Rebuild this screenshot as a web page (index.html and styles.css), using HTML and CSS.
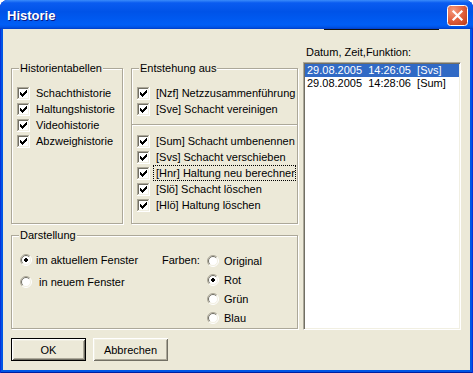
FILE: index.html
```html
<!DOCTYPE html>
<html lang="de">
<head>
    <meta charset="UTF-8">
    <title>Historie</title>
    <link rel="stylesheet" href="styles.css">
</head>
<body>
    <!-- kleine Symbole fuer Checkbox und Radio -->
    <svg class="defs" width="0" height="0">
        <symbol id="cb" viewBox="0 0 13 13">
            <rect width="13" height="13" fill="#fff"/>
            <path d="M0 0h12v1H1v11H0z" fill="#aca899"/>
            <path d="M1 1h10v1H2v9H1z" fill="#716f64"/>
            <path d="M12 0h1v13H0v-1h12z" fill="#fff"/>
            <path d="M11 1h1v11H1v-1h10z" fill="#f1efe2"/>
            <path d="M3 5h1v3H3zM4 6h1v3H4zM5 7h1v3H5zM6 6h1v3H6zM7 5h1v3H7zM8 4h1v3H8zM9 3h1v3H9z" fill="#000"/>
        </symbol>
        <symbol id="rb" viewBox="0 0 12 12">
            <circle cx="6" cy="6" r="5" fill="#fff"/>
            <path d="M9.9 2.1A5.5 5.5 0 0 0 2.1 9.9" fill="none" stroke="#aca899"/>
            <path d="M2.1 9.9A5.5 5.5 0 0 0 9.9 2.1" fill="none" stroke="#fff"/>
            <path d="M9.2 2.8A4.5 4.5 0 0 0 2.8 9.2" fill="none" stroke="#716f64"/>
            <path d="M2.8 9.2A4.5 4.5 0 0 0 9.2 2.8" fill="none" stroke="#f1efe2"/>
        </symbol>
        <symbol id="rbon" viewBox="0 0 12 12">
            <use href="#rb"/>
            <path d="M5 4h2v1h1v2H7v1H5V7H4V5h1z" fill="#000"/>
        </symbol>
    </svg>

    <div class="window">
        <div class="titlebar">
            <span class="title">Historie</span>
            <button class="close" aria-label="Schließen">
                <svg width="21" height="21" viewBox="0 0 21 21">
                    <defs>
                        <radialGradient id="red" cx="30%" cy="25%" r="90%">
                            <stop offset="0" stop-color="#f49a7c"/>
                            <stop offset="0.55" stop-color="#e2603d"/>
                            <stop offset="1" stop-color="#c2401c"/>
                        </radialGradient>
                    </defs>
                    <rect x="0.5" y="0.5" width="20" height="20" rx="3" fill="url(#red)" stroke="#fff"/>
                    <path d="M6.5 6.5l8 8M14.5 6.5l-8 8" stroke="#fff" stroke-width="2.2" stroke-linecap="square"/>
                </svg>
            </button>
        </div>

        <div class="client">
            <div class="topline"></div>
            <div class="content">
                <div class="leftcol">
                    <div class="groups">
                        <div class="group hist">
                            <div class="group-title">Historientabellen</div>
                            <div class="rows">
                                <div class="row"><svg><use href="#cb"/></svg><span class="lbl">Schachthistorie</span></div>
                                <div class="row"><svg><use href="#cb"/></svg><span class="lbl">Haltungshistorie</span></div>
                                <div class="row"><svg><use href="#cb"/></svg><span class="lbl">Videohistorie</span></div>
                                <div class="row"><svg><use href="#cb"/></svg><span class="lbl">Abzweighistorie</span></div>
                            </div>
                        </div>
                        <div class="group entst">
                            <div class="group-title">Entstehung aus</div>
                            <div class="rows">
                                <div class="row"><svg><use href="#cb"/></svg><span class="lbl">[Nzf] Netzzusammenführung</span></div>
                                <div class="row"><svg><use href="#cb"/></svg><span class="lbl">[Sve] Schacht vereinigen</span></div>
                            </div>
                            <div class="divider"></div>
                            <div class="rows rows-2">
                                <div class="row"><svg><use href="#cb"/></svg><span class="lbl">[Sum] Schacht umbenennen</span></div>
                                <div class="row"><svg><use href="#cb"/></svg><span class="lbl">[Svs] Schacht verschieben</span></div>
                                <div class="row"><svg><use href="#cb"/></svg><span class="lbl focus">[Hnr] Haltung neu berechnen</span></div>
                                <div class="row"><svg><use href="#cb"/></svg><span class="lbl">[Slö] Schacht löschen</span></div>
                                <div class="row"><svg><use href="#cb"/></svg><span class="lbl">[Hlö] Haltung löschen</span></div>
                            </div>
                        </div>
                    </div>

                    <div class="group darst">
                        <div class="group-title">Darstellung</div>
                        <div class="darst-body">
                            <div class="win-choice">
                                <div class="row"><svg class="radio"><use href="#rbon"/></svg><span class="lbl">im aktuellem Fenster</span></div>
                                <div class="row"><svg class="radio"><use href="#rb"/></svg><span class="lbl"> in neuem Fenster</span></div>
                            </div>
                            <div class="farben-lbl">Farben:</div>
                            <div class="farben">
                                <div class="row"><svg class="radio"><use href="#rb"/></svg><span class="lbl">Original</span></div>
                                <div class="row"><svg class="radio"><use href="#rbon"/></svg><span class="lbl">Rot</span></div>
                                <div class="row"><svg class="radio"><use href="#rb"/></svg><span class="lbl">Grün</span></div>
                                <div class="row"><svg class="radio"><use href="#rb"/></svg><span class="lbl">Blau</span></div>
                            </div>
                        </div>
                    </div>

                    <div class="buttons">
                        <button class="btn default">OK</button>
                        <button class="btn">Abbrechen</button>
                    </div>
                </div>

                <div class="rightcol">
                    <div class="list-label">Datum, Zeit,Funktion:</div>
                    <div class="listbox">
                        <div class="item sel">29.08.2005  14:26:05  [Svs]</div>
                        <div class="item">29.08.2005  14:28:06  [Sum]</div>
                    </div>
                </div>
            </div>
        </div>
    </div>
</body>
</html>
```

FILE: styles.css
```css
* {
    margin: 0;
    padding: 0;
    box-sizing: border-box;
}

body {
    background: #fff;
    font: 11px "Liberation Sans", Arial, sans-serif;
    color: #000;
}

.defs { position: absolute; }

.window {
    width: 473px;
    height: 373px;
    display: flex;
    flex-direction: column;
    background: #0055e5;
    border-radius: 8px 8px 0 0;
    overflow: hidden;
    box-shadow: inset 1px 0 #0831d9, inset -1px 0 #0831d9, inset 0 -1px #001ea0;
}

/* Titelleiste */
.titlebar {
    height: 29px;
    flex: none;
    display: flex;
    align-items: center;
    justify-content: space-between;
    padding: 2px 5px 0 7px;
    background: linear-gradient(#3a8cfa 0%, #0a5cf0 10%, #0053e8 40%, #005ef6 85%, #0055e8 93%, #003dc8 100%);
}

.title {
    font: bold 13px "Liberation Sans", Arial, sans-serif;
    color: #fff;
    text-shadow: 1px 1px #0a1883;
}

.close {
    width: 21px;
    height: 21px;
    border: 0;
    background: none;
    display: block;
}

.close svg { display: block; }

.client {
    flex: 1;
    margin: 0 3px 3px;
    background: #ece9d8;
}

.topline {
    height: 1px;
    width: 115px;
    margin-left: 321px;
    background: #111;
}

.content {
    display: flex;
    padding-left: 8px;
}

.leftcol {
    width: 287px;
    padding-top: 38px;
}

.groups {
    display: flex;
    gap: 8px;
}

/* Rahmen wie Windows "etched" */
.group {
    border: 1px solid #aca899;
    box-shadow: 1px 1px 0 #fff, inset 1px 1px 0 #fff;
}

.group-title {
    width: fit-content;
    margin: -7px 0 0 7px;
    padding: 0 1px;
    line-height: 13px;
    background: #ece9d8;
}

.hist { width: 112px; height: 156px; }
.entst { width: 167px; height: 156px; }

.rows {
    margin-top: 10px;
    padding-left: 5px;
}

.rows-2 { margin-top: 0; }

.row {
    display: flex;
    align-items: center;
    height: 16px;
}

.row svg {
    width: 13px;
    height: 13px;
    flex: none;
}

.row svg.radio {
    width: 12px;
    height: 12px;
}

.lbl {
    margin-left: 3px;
    padding: 0 2px;
    border: 1px solid transparent;
    line-height: 14px;
    white-space: pre;
}

.lbl.focus {
    border: 1px dotted #000;
    width: 143px;
    flex: none;
    overflow: hidden;
}

.divider {
    margin: 7px 0;
    border-top: 1px solid #aca899;
    border-bottom: 1px solid #fff;
}

.darst {
    height: 94px;
    margin-top: 11px;
}

.darst-body {
    display: flex;
    padding: 10px 0 0 8px;
}

.win-choice {
    width: 142px;
    display: flex;
    flex-direction: column;
    gap: 6px;
}

.win-choice .lbl { margin-left: 1px; }

.farben-lbl {
    width: 45px;
    line-height: 16px;
}

.farben {
    display: flex;
    flex-direction: column;
    gap: 3px;
    padding-top: 1px;
}

.farben .lbl { margin-left: 2px; }

.buttons {
    display: flex;
    gap: 7px;
    margin-top: 9px;
}

.btn {
    width: 75px;
    height: 23px;
    font: 11px "Liberation Sans", Arial, sans-serif;
    color: #000;
    background: #ece9d8;
    border: 0;
    box-shadow: inset 1px 1px #fff, inset -1px -1px #716f64, inset 2px 2px #f1efe2, inset -2px -2px #aca899;
}

.btn.default {
    box-shadow: inset 0 0 0 1px #000, inset 2px 2px #fff, inset -2px -2px #716f64, inset 3px 3px #f1efe2, inset -3px -3px #aca899;
}

.rightcol {
    margin-left: 5px;
    width: 158px;
}

.list-label {
    margin-top: 16px;
    padding-left: 3px;
    line-height: 13px;
}

.listbox {
    margin-top: 3px;
    height: 268px;
    padding: 1px;
    background: #fff;
    border: 1px solid;
    border-color: #aca899 #fff #fff #aca899;
    box-shadow: inset 1px 1px #716f64, inset -1px -1px #f1efe2;
}

.item {
    line-height: 13px;
    padding-left: 2px;
    white-space: pre;
}

.item.sel {
    background: #316ac5;
    color: #fff;
}
```
